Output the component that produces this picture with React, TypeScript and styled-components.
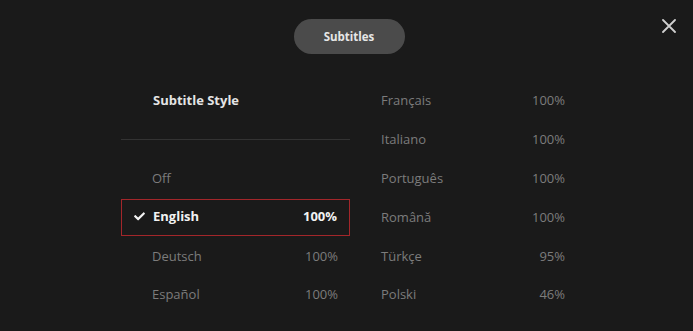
import React from "react";
import styled, { createGlobalStyle, css } from "styled-components";
import { FaCheck } from "react-icons/fa";

const GlobalStyle = createGlobalStyle`
  html, body {
    margin: 0;
    padding: 0;
    background: #1a1a1a;
  }
  body {
    font-family: "Open Sans", "Noto Sans", sans-serif;
  }
`;

const Screen = styled.div`
  position: relative;
  width: 693px;
  height: 331px;
  overflow: hidden;
  background: #1a1a1a;
  padding: 19px 116px 0 121px;
  box-sizing: border-box;
`;

const Header = styled.div`
  display: flex;
  justify-content: center;
  margin-bottom: 27px;
`;

const Pill = styled.div`
  width: 111px;
  height: 35px;
  border-radius: 18px;
  background: #4b4b4b;
  color: #e6e6e6;
  font-size: 11.5px;
  font-weight: 700;
  display: flex;
  align-items: center;
  justify-content: center;
`;

const CloseButton = styled.button`
  position: absolute;
  top: 17px;
  right: 15px;
  width: 18px;
  height: 18px;
  padding: 0;
  border: 0;
  background: transparent;
  display: flex;
  align-items: center;
  justify-content: center;
`;

const Columns = styled.div`
  display: grid;
  grid-template-columns: 227px 227px;
  column-gap: 2px;
`;

const Column = styled.div`
  display: grid;
  grid-auto-rows: 38.8px;
`;

const selectedRow = css`
  color: #f2f2f2;
  font-weight: 700;
  border: 1px solid #a3262a;
  margin-top: 1.5px;
  height: 37.5px;
  padding-bottom: 3px;
`;

const Row = styled.div<{ $selected?: boolean }>`
  position: relative;
  display: flex;
  align-items: center;
  justify-content: space-between;
  padding: 0 12px 0 31px;
  font-size: 13px;
  color: #7c7c7c;
  font-weight: 400;
  box-sizing: border-box;
  ${(p) => p.$selected && selectedRow}
`;

const Heading = styled.div`
  display: flex;
  align-items: center;
  padding-left: 32px;
  font-size: 13px;
  font-weight: 700;
  color: #e4e4e4;
`;

const Divider = styled.div`
  display: flex;
  align-items: center;
  width: 229px;
  &::after {
    content: "";
    flex: 1;
    height: 1px;
    background: #333333;
  }
`;

const Check = styled.span`
  position: absolute;
  left: 12px;
  top: 50%;
  transform: translateY(-65%);
  display: flex;
  color: #f2f2f2;
`;

type Lang = { name: string; pct: string; selected?: boolean };

const left: Lang[] = [
  { name: "Off", pct: "" },
  { name: "English", pct: "100%", selected: true },
  { name: "Deutsch", pct: "100%" },
  { name: "Español", pct: "100%" },
];

const right: Lang[] = [
  { name: "Français", pct: "100%" },
  { name: "Italiano", pct: "100%" },
  { name: "Português", pct: "100%" },
  { name: "Română", pct: "100%" },
  { name: "Türkçe", pct: "95%" },
  { name: "Polski", pct: "46%" },
];

const LangRow = ({ lang }: { lang: Lang }) => (
  <Row $selected={lang.selected}>
    {lang.selected && (
      <Check>
        <FaCheck size={11} />
      </Check>
    )}
    <span>{lang.name}</span>
    <span>{lang.pct}</span>
  </Row>
);

export default function App() {
  return (
    <>
      <GlobalStyle />
      <Screen>
        <Header>
          <Pill>Subtitles</Pill>
        </Header>
        <CloseButton aria-label="Close">
          <svg width="14" height="14" viewBox="0 0 14 14">
            <path
              d="M1 1 L13 13 M13 1 L1 13"
              stroke="#cfcfcf"
              strokeWidth="1.8"
              strokeLinecap="round"
            />
          </svg>
        </CloseButton>
        <Columns>
          <Column>
            <Heading>Subtitle Style</Heading>
            <Divider />
            {left.map((l) => (
              <LangRow key={l.name} lang={l} />
            ))}
          </Column>
          <Column>
            {right.map((l) => (
              <LangRow key={l.name} lang={l} />
            ))}
          </Column>
        </Columns>
      </Screen>
    </>
  );
}
